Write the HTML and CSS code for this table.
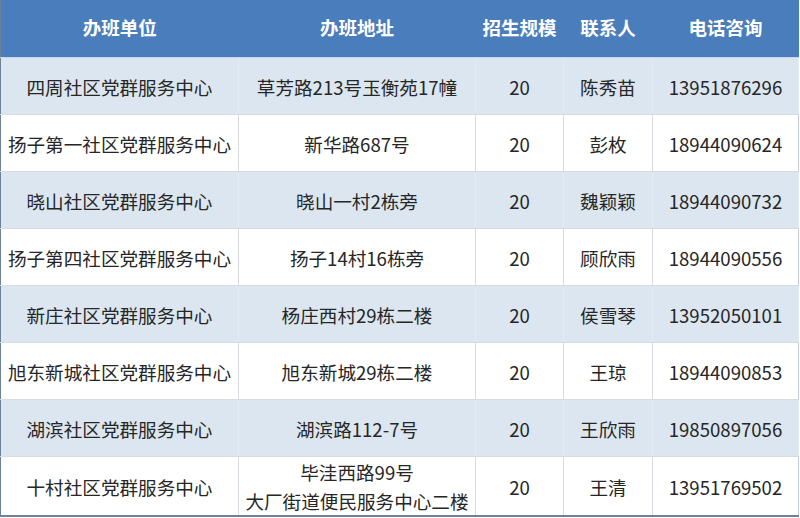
FILE: index.html
```html
<!DOCTYPE html>
<html lang="zh-CN">
<head>
<meta charset="utf-8">
<link rel="stylesheet" href="styles.css">
</head>
<body>
<table class="sheet">
  <colgroup>
    <col class="c1"><col class="c2"><col class="c3"><col class="c4"><col class="c5">
  </colgroup>
  <thead>
    <tr><th>办班单位</th><th>办班地址</th><th>招生规模</th><th>联系人</th><th>电话咨询</th></tr>
  </thead>
  <tbody>
    <tr class="alt"><td>四周社区党群服务中心</td><td>草芳路213号玉衡苑17幢</td><td>20</td><td>陈秀苗</td><td>13951876296</td></tr>
    <tr><td>扬子第一社区党群服务中心</td><td>新华路687号</td><td>20</td><td>彭枚</td><td>18944090624</td></tr>
    <tr class="alt"><td>晓山社区党群服务中心</td><td>晓山一村2栋旁</td><td>20</td><td>魏颖颖</td><td>18944090732</td></tr>
    <tr><td>扬子第四社区党群服务中心</td><td>扬子14村16栋旁</td><td>20</td><td>顾欣雨</td><td>18944090556</td></tr>
    <tr class="alt"><td>新庄社区党群服务中心</td><td>杨庄西村29栋二楼</td><td>20</td><td>侯雪琴</td><td>13952050101</td></tr>
    <tr><td>旭东新城社区党群服务中心</td><td>旭东新城29栋二楼</td><td>20</td><td>王琼</td><td>18944090853</td></tr>
    <tr class="alt"><td>湖滨社区党群服务中心</td><td>湖滨路112-7号</td><td>20</td><td>王欣雨</td><td>19850897056</td></tr>
    <tr><td>十村社区党群服务中心</td><td class="two">毕洼西路99号<br>大厂街道便民服务中心二楼</td><td>20</td><td>王清</td><td>13951769502</td></tr>
  </tbody>
</table>
</body>
</html>
```
FILE: styles.css
```css
html, body {
  margin: 0;
  padding: 0;
  background: #ffffff;
}
.sheet {
  border-collapse: collapse;
  table-layout: fixed;
  width: 798px;
  font-family: "Noto Sans CJK SC", "Noto Sans", sans-serif;
  border-left: 1px solid #6d8199;
  border-bottom: 2px solid #6d8199;
}
.c1 { width: 238px; }
.c2 { width: 237px; }
.c3 { width: 88px; }
.c4 { width: 89px; }
.c5 { width: 146px; }
.sheet th {
  height: 53px;
  padding: 0 0 4px 0;
  background: #4a7dbb;
  color: #ffffff;
  font-size: 18.5px;
  font-weight: 700;
  text-align: center;
  border-bottom: 1px solid #c9d7ea;
}
.sheet td {
  height: 56px;
  padding: 0;
  text-align: center;
  color: #262626;
  font-size: 18.6px;
  line-height: 29px;
  border: 1px solid #d8dce2;
  border-left: 1px solid #dde1e6;
}
.sheet td:first-child {
  border-left: none;
}
.sheet tr.alt td {
  background: #dce6f1;
  border-left-color: #e4ebf4;
  border-right-color: #e4ebf4;
}
.sheet td:last-child {
  border-right: 1px solid #c4ccd6;
}
```
